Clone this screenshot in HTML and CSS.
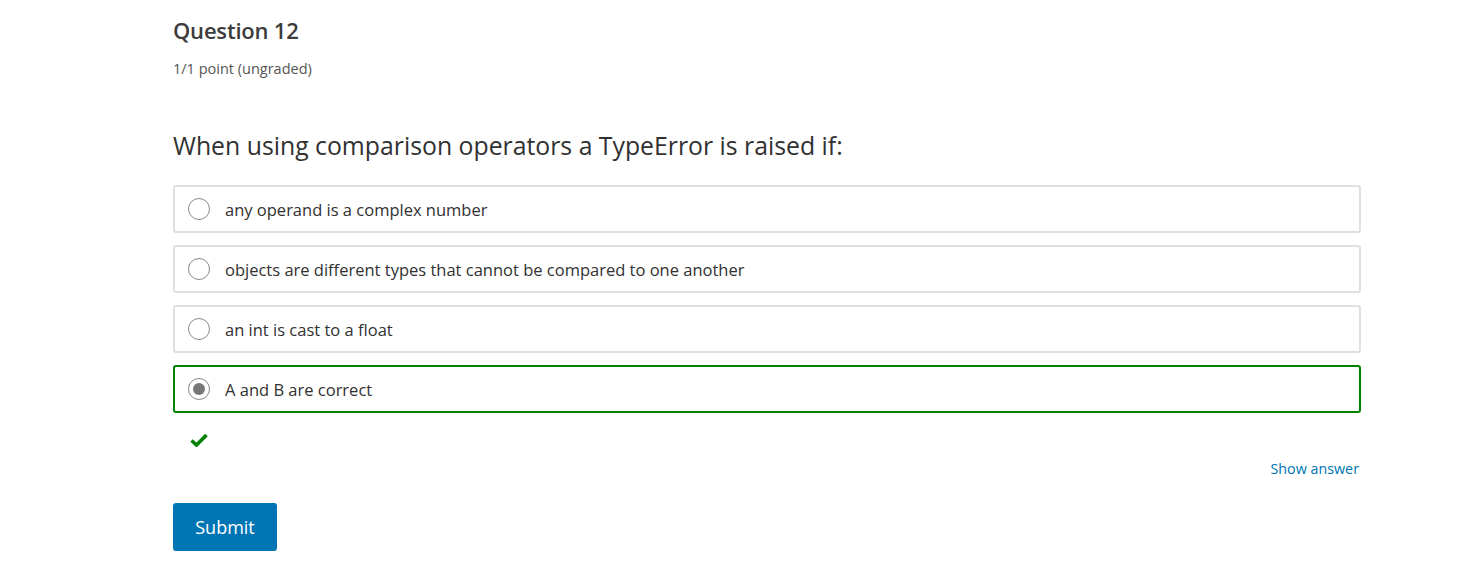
FILE: index.html
```html
<!DOCTYPE html>
<html>
<head>
<meta charset="utf-8">
<link rel="stylesheet" href="styles.css">
</head>
<body>
<div class="problem">
  <h3 class="title">Question 12</h3>
  <div class="points">1/1 point (ungraded)</div>
  <p class="prompt">When using comparison operators a TypeError is raised if:</p>
  <div class="choices">
    <label class="choice"><span class="radio"></span><span class="label">any operand is a complex number</span></label>
    <label class="choice"><span class="radio"></span><span class="label">objects are different types that cannot be compared to one another</span></label>
    <label class="choice"><span class="radio"></span><span class="label">an int is cast to a float</span></label>
    <label class="choice correct"><span class="radio checked"></span><span class="label">A and B are correct</span></label>
  </div>
  <div class="status">
    <svg width="18" height="14" viewBox="0 0 18 14"><path d="M1.5 7.5 L6.5 12 L16.5 2" fill="none" stroke="#008100" stroke-width="3.6" stroke-linejoin="miter" stroke-linecap="butt"/></svg>
  </div>
  <div class="actions-row"><a class="show-answer">Show answer</a></div>
  <button class="submit">Submit</button>
</div>
</body>
</html>
```
FILE: styles.css
```css
html, body { margin: 0; padding: 0; background: #fff; }
body { font-family: "Open Sans", "Noto Sans", sans-serif; color: #313131; }
.problem { width: 1188px; margin-left: 173px; padding-top: 15px; }
.title { margin: 0; font-size: 22px; font-weight: 600; color: #3c3c3c; line-height: 30px; letter-spacing: -0.2px; }
.points { margin-top: 14px; font-size: 14.5px; color: #555; line-height: 20px; }
.prompt { margin: 50px 0 0; font-size: 24.8px; line-height: 32px; color: #313131; }
.choices { margin-top: 24px; display: flex; flex-direction: column; gap: 12px; }
.choice { display: flex; align-items: center; height: 48px; box-sizing: border-box; border: 2px solid #e0e0e0; border-radius: 3px; padding-left: 13px; }
.choice.correct { border-color: #008100; }
.radio { width: 20px; height: 20px; border: 1px solid #8a8a8a; border-radius: 50%; box-sizing: content-box; position: relative; flex: none; background: #fff; }
.radio.checked::after { content: ""; position: absolute; left: 4px; top: 4px; width: 12px; height: 12px; border-radius: 50%; background: #777; }
.label { margin-left: 15px; font-size: 16.5px; color: #313131; }
.status { margin-top: 20px; padding-left: 17px; height: 14px; }
.status svg { display: block; }
.actions-row { margin-top: 12px; display: flex; justify-content: flex-end; padding-right: 2px; }
.show-answer { font-size: 14.3px; color: #0075b4; line-height: 20px; }
.submit { margin-top: 24px; display: block; width: 104px; height: 48px; background: #0075b4; color: #fff; border: none; border-radius: 3px; font-family: "Open Sans", "Noto Sans", sans-serif; font-size: 18px; padding: 0; }
```
